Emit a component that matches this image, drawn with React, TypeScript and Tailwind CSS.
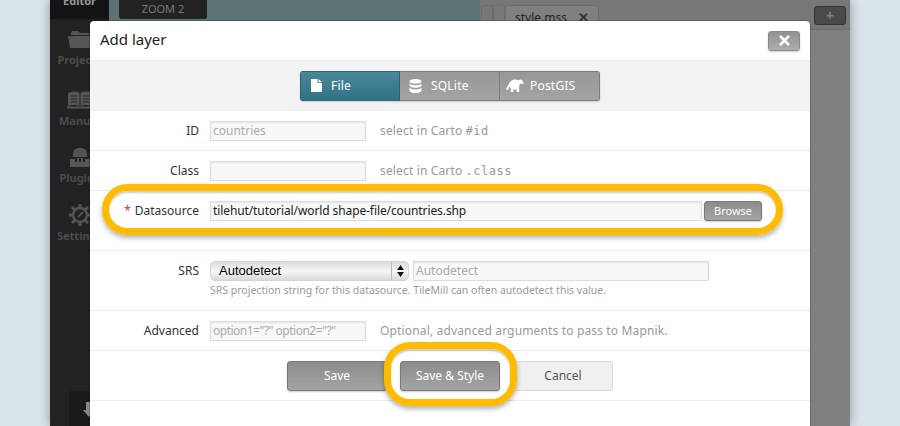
const font = "font-['Noto_Sans','Open_Sans',sans-serif]"

const Ring = ({ className }: { className: string }) => (
  <div className={`absolute z-20 rounded-[26px] border-[7px] border-[#ffbb00] shadow-[0_3px_5px_rgba(0,0,0,0.3),inset_0_2px_2px_rgba(0,0,0,0.2)] ${className}`}></div>
)

const FileIcon = () => (
  <svg width="11" height="13" viewBox="0 0 11 13" fill="#fff">
    <path d="M0 0h6.500v4H11v9H0z" />
    <path d="M7.500 0L11 3.200H7.500z" />
  </svg>
)

const DbIcon = () => (
  <svg width="13" height="14" viewBox="0 0 13 14" fill="#fff">
    <ellipse cx="6.500" cy="2.400" rx="6" ry="2.400" />
    <path d="M.5 4.200c1 1.400 3.400 2 6 2s5-.6 6-2v2.600c-1 1.400-3.400 2-6 2s-5-.6-6-2z" />
    <path d="M.5 8.400c1 1.400 3.400 2 6 2s5-.6 6-2v3c0 1.500-2.700 2.600-6 2.600s-6-1.100-6-2.600z" />
  </svg>
)

const ElephantIcon = () => (
  <svg width="18" height="13" viewBox="0 0 18 13" fill="#fff">
    <path d="M0 10.500c.5-2 1.500-3.500 2.500-4.500C3.500 2.500 6 .6 9 .6c1.500 0 2.500.3 3.300.9C13 .7 14 .4 15 .8c1.500.6 2.500 2 2.700 3.600l-1.800.6-1.400-.5c-.3.8-.8 1.300-1.300 1.600V13h-2.600v-2.600H7.400V13H4.800V9C4.200 8.500 3.900 8 3.700 7.400 3 8.300 2.500 9.500 2 11z" />
  </svg>
)

const SidebarItem = ({ label, icon, className }: { label: string; icon: React.ReactNode; className: string }) => (
  <div className={`flex flex-col items-center ${className}`}>
    <div className="flex h-[22px] items-center">{icon}</div>
    <div className="mt-[2px] text-[11px] leading-[16px] font-bold text-[#4c4c4c]">{label}</div>
  </div>
)

const FieldRow = ({ label, required, className, children }: { label: string; required?: boolean; className: string; children: React.ReactNode }) => (
  <div className={`flex items-start border-b border-[#ececec] ${className}`}>
    <div className="w-[120px] pr-[11px] text-right text-[12px] leading-[20px] text-[#333]">
      {required && <span className="mr-[4px] text-[#d33]">*</span>}
      {label}
    </div>
    {children}
  </div>
)

const inputClass = 'h-[20px] border border-[#ddd] bg-[#f8f8f8] px-[2px] text-[12px] leading-[18px] shadow-[inset_0_1px_2px_rgba(0,0,0,0.08)]'
const greyBtn = 'flex items-center justify-center rounded-[3px] border border-[#777] bg-gradient-to-b from-[#8c8c8c] to-[#a4a4a4] text-[#fff] shadow-[0_1px_2px_rgba(0,0,0,0.2)]'
const hint = 'ml-[14px] text-[12px] leading-[20px] tracking-[0.15px] text-[#999]'
const mono = "font-['DejaVu_Sans_Mono',monospace] text-[12px] tracking-[0.5px]"

export default function App() {
  return (
    <div className={`relative h-[426px] w-[900px] overflow-hidden bg-[#d9e5ea] ${font}`}>
      {/* App behind the modal */}
      <div className="mx-[50px] flex h-[426px] w-[800px] shadow-[0_0_10px_rgba(0,0,0,0.35)]">
        <div className="flex w-[59px] flex-col bg-[#222]">
          <div className="h-[19px] bg-[#141414] text-center text-[11px] leading-[2px] font-bold text-[#999]">Editor</div>
          <SidebarItem
            label="Projects"
            className="mt-[9px]"
            icon={
              <svg width="24" height="19" viewBox="0 0 24 19" fill="#555">
                <path d="M3 3l1-2h6l2 2h9v2H3z" />
                <path d="M0 6h24l-2 12H2z" />
              </svg>
            }
          />
          <SidebarItem
            label="Manual"
            className="mt-[21px]"
            icon={
              <svg width="26" height="18" viewBox="0 0 26 18" fill="#555">
                <path d="M1 2c4-2 9-2 11.500 0v13C10 13.500 5 13.500 1 15z" />
                <path d="M25 2c-4-2-9-2-11.500 0v13c2.500-1.500 7.500-1.500 11.500 0z" />
                <path d="M0 15.500h26v2H0z" />
                <path d="M4 5h6M4 8h6M4 11h6M16 5h6M16 8h6M16 11h6" stroke="#222" strokeWidth="1.200" />
              </svg>
            }
          />
          <SidebarItem
            label="Plugins"
            className="mt-[17px]"
            icon={
              <svg width="22" height="21" viewBox="0 0 22 21" fill="#555">
                <path d="M4 8c0-5 2-7 7-7s7 2 7 7v2H4z" />
                <path d="M1 12h5v3h10v-3h5v8H1z" />
                <path d="M8 11h2v4H8zM12 11h2v4h-2z" />
              </svg>
            }
          />
          <SidebarItem
            label="Settings"
            className="mt-[18px]"
            icon={
              <svg width="22" height="22" viewBox="0 0 22 22" fill="none" stroke="#555">
                <circle cx="11" cy="11" r="7" strokeWidth="2.500" />
                <path d="M11 0v4M11 18v4M0 11h4M18 11h4M3 3l3 3M16 16l3 3M19 3l-3 3M6 16l-3 3" strokeWidth="3" />
                <path d="M9 13l5-5" strokeWidth="2" />
              </svg>
            }
          />
          <div className="mt-auto ml-[19px] flex h-[35px] w-[40px] items-start bg-[#1a1a1a] pt-[11px] pl-[14px]">
            <svg width="12" height="15" viewBox="0 0 12 15" fill="#888">
              <path d="M3 0h6v8h3l-6 7-6-7h3z" />
            </svg>
          </div>
        </div>
        <div className="flex w-[371px] flex-col bg-[#5d7272]">
          <div className="ml-[10px] flex h-[19px] w-[88px] items-center justify-center rounded-b-[3px] bg-[#222] pb-[1px] text-[11px] text-[#777]">
            ZOOM 2
          </div>
        </div>
        <div className="flex flex-1 flex-col bg-[#808080]">
          <div className="flex h-[30px] items-start border-b border-[#6c6c6c] bg-[#777] pt-[5px] pl-[1px]">
            <div className="h-[25px] w-[12px] rounded-t-[2px] border border-[#6c6c6c]"></div>
            <div className="h-[25px] w-[12px] rounded-t-[2px] border border-[#6c6c6c]"></div>
            <div className="flex h-[25px] w-[94px] items-center justify-between rounded-t-[3px] border border-[#6c6c6c] bg-[#808080] px-[9px] text-[12px] text-[#222]">
              style.mss
              <span className="text-[13px] font-bold text-[#333]">✕</span>
            </div>
            <div className="mt-[1px] mr-[4px] ml-auto flex h-[19px] w-[32px] items-center justify-center rounded-[3px] border border-[#333] bg-[#4a4a4a] text-[14px] font-bold text-[#808080]">
              +
            </div>
          </div>
        </div>
      </div>

      {/* Modal */}
      <div className="absolute top-[21px] left-[90px] z-10 w-[720px] rounded-t-[4px] bg-white shadow-[0_0_0_1px_rgba(0,0,0,0.2)]">
        <div className="flex h-[40px] items-center justify-between border-b border-[#ececec] pr-[10px] pl-[10px]">
          <div className="pb-[2px] text-[15px] text-[#222]">Add layer</div>
          <div className="flex h-[20px] w-[32px] items-center justify-center rounded-[3px] border border-[#8a8a8a] bg-gradient-to-b from-[#939393] to-[#adadad] shadow-[0_1px_2px_rgba(0,0,0,0.2)]">
            <svg width="11" height="11" viewBox="0 0 11 11" stroke="#fff" strokeWidth="2.500">
              <path d="M1 1l9 9M10 1l-9 9" />
            </svg>
          </div>
        </div>
        <div className="flex h-[50px] items-center justify-center border-b border-[#ececec] bg-[#f3f3f3]">
          <div className="flex h-[30px] w-[300px] overflow-hidden rounded-[3px] tracking-[0.2px] shadow-[0_1px_2px_rgba(0,0,0,0.15)]">
            <div className="flex w-[100px] items-center gap-[9px] border border-[#2a6373] bg-gradient-to-b from-[#4a8799] to-[#2f7386] pl-[10px] text-[12px] text-white">
              <FileIcon />
              File
            </div>
            <div className="flex w-[100px] items-center gap-[9px] border border-l-0 border-[#7c7c7c] bg-gradient-to-b from-[#979797] to-[#a4a4a4] pl-[9px] text-[12px] text-white">
              <DbIcon />
              SQLite
            </div>
            <div className="flex w-[100px] items-center gap-[6px] border border-l-0 border-[#7c7c7c] bg-gradient-to-b from-[#979797] to-[#a4a4a4] pl-[6px] text-[12px] text-white">
              <ElephantIcon />
              PostGIS
            </div>
          </div>
        </div>

        <FieldRow label="ID" className="h-[40px] pt-[10px]">
          <div className={`w-[156px] text-[#aaa] ${inputClass}`}>countries</div>
          <div className={hint}>
            select in Carto <span className={mono}>#id</span>
          </div>
        </FieldRow>
        <FieldRow label="Class" className="h-[40px] pt-[10px]">
          <div className={`w-[156px] ${inputClass}`}></div>
          <div className={hint}>
            select in Carto <span className={mono}>.class</span>
          </div>
        </FieldRow>
        <FieldRow label="Datasource" required className="h-[60px] pt-[10px]">
          <div className={`w-[492px] tracking-[-0.1px] text-[#222] ${inputClass}`}>tilehut/tutorial/world shape-file/countries.shp</div>
          <div className={`ml-[2px] h-[20px] w-[58px] text-[11px] ${greyBtn}`}>Browse</div>
        </FieldRow>
        <FieldRow label="SRS" className="h-[60px] pt-[10px]">
          <div>
            <div className="flex items-start gap-[4px]">
              <div className="flex h-[20px] w-[199px] overflow-hidden rounded-[5px] border border-[#d4d4d4] bg-gradient-to-b from-[#dcdcdc] via-[#f6f6f6] to-[#dadada] font-['Liberation_Sans',sans-serif] text-[13px] leading-[18px] text-black">
                <div className="flex-1 pl-[8px]">Autodetect</div>
                <div className="flex w-[17px] items-center justify-center border-l border-[#bbb]">
                  <svg width="7" height="12" viewBox="0 0 7 12" fill="#111">
                    <path d="M3.500 0L7 5H0zM0 7h7l-3.500 5z" />
                  </svg>
                </div>
              </div>
              <div className={`w-[296px] text-[#aaa] ${inputClass}`}>Autodetect</div>
            </div>
            <div className="mt-[1px] text-[10.5px] leading-[16px] text-[#999]">
              SRS projection string for this datasource. TileMill can often autodetect this value.
            </div>
          </div>
        </FieldRow>
        <FieldRow label="Advanced" className="h-[40px] pt-[10px]">
          <div className={`w-[156px] whitespace-nowrap tracking-[-0.5px] text-[#aaa] ${inputClass}`}>option1="?" option2="?"</div>
          <div className={hint}>Optional, advanced arguments to pass to Mapnik.</div>
        </FieldRow>
        <div className="flex h-[50px] items-center justify-center gap-[13px] border-b border-[#ececec]">
          <div className={`h-[30px] w-[100px] text-[12px] ${greyBtn}`}>Save</div>
          <div className={`h-[30px] w-[100px] text-[12px] ${greyBtn}`}>Save &amp; Style</div>
          <div className="flex h-[30px] w-[100px] items-center justify-center rounded-[3px] border border-[#ddd] bg-[#f0f0f0] text-[12px] text-[#555]">
            Cancel
          </div>
        </div>
        <div className="h-[26px]"></div>
      </div>

      {/* Tutorial callouts */}
      <Ring className="top-[184px] left-[102px] h-[51px] w-[681px]" />
      <Ring className="top-[342px] left-[384px] h-[64px] w-[133px]" />
    </div>
  )
}
